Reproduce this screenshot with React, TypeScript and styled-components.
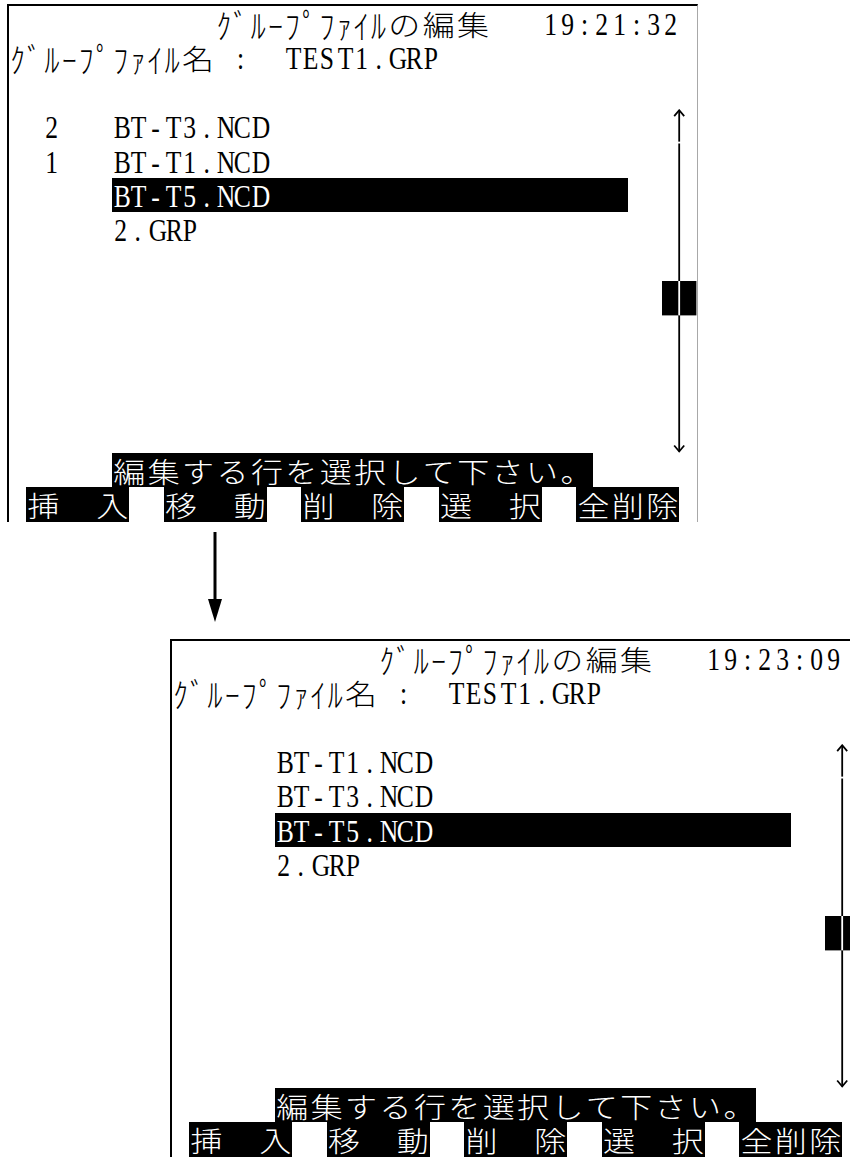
import React from 'react';
import styled, { createGlobalStyle, css } from 'styled-components';

const CELL = 17.2;
const ROW = 34.4;
const COLS = 40;
const ROWS = 15;

type Kind = 'latin' | 'kana' | 'wide';

const Global = createGlobalStyle`
  html, body { margin: 0; padding: 0; background: #fff; }
  body { width: 850px; height: 1160px; overflow: hidden; }
`;

const Page = styled.main`
  display: flex;
  flex-direction: column;
  align-items: flex-start;
  width: 850px;
  height: 1160px;
  overflow: hidden;
  padding-top: 4px;
  box-sizing: border-box;
`;

const Screen = styled.section<{ $indent: number; $gap: number }>`
  flex: none;
  display: grid;
  grid-template-columns: repeat(${COLS}, ${CELL}px);
  grid-template-rows: repeat(${ROWS}, ${ROW}px);
  width: ${COLS * CELL}px;
  margin-left: ${(p) => p.$indent}px;
  margin-top: ${(p) => p.$gap}px;
  border-top: 2px solid #000;
  border-left: 2px solid #000;
  border-right: 1px solid #a8a8a8;
  background: #fff;
`;

const Segment = styled.div<{ $row: number; $col: number; $span: number; $inverse?: boolean }>`
  grid-row: ${(p) => p.$row + 1};
  grid-column: ${(p) => p.$col + 1} / span ${(p) => p.$span};
  display: flex;
  height: ${ROW}px;
  background: ${(p) => (p.$inverse ? '#000' : 'transparent')};
  color: ${(p) => (p.$inverse ? '#fff' : '#000')};
`;

const kindStyles: Record<Kind, ReturnType<typeof css>> = {
  latin: css`
    width: ${CELL}px;
    font-family: 'Liberation Serif', 'Times New Roman', serif;
    font-size: 32px;
    transform: translateY(1px) scaleX(0.8);
  `,
  kana: css`
    width: ${CELL}px;
    font-family: 'Noto Sans CJK JP', 'Noto Sans CJK SC', sans-serif;
    font-weight: 300;
    font-size: 30px;
    transform: translateY(1px) scaleY(1.12);
  `,
  wide: css`
    width: ${CELL * 2}px;
    font-family: 'Noto Sans CJK JP', 'Noto Sans CJK SC', sans-serif;
    font-weight: 300;
    font-size: 32px;
    transform: scaleY(0.9);
  `,
};

const Glyph = styled.span<{ $kind: Kind }>`
  flex: none;
  display: block;
  height: ${ROW}px;
  line-height: ${ROW}px;
  text-align: center;
  white-space: pre;
  ${(p) => kindStyles[p.$kind]}
`;

const ScrollTrack = styled.div`
  grid-row: 4 / span 10;
  grid-column: 39 / span 2;
  display: block;
`;

const FlowArrow = styled.svg`
  flex: none;
  display: block;
  margin: 10px 0 0 207px;
`;

type Seg = { row: number; col: number; text: string; inverse?: boolean; span?: number };

const kindOf = (ch: string): Kind => {
  const c = ch.codePointAt(0) ?? 0;
  if (c <= 0x7e) return 'latin';
  if (c >= 0xff61 && c <= 0xff9f) return 'kana';
  return 'wide';
};

const widthOf = (ch: string) => (kindOf(ch) === 'wide' ? 2 : 1);

const textCells = (s: string) => Array.from(s).reduce((n, ch) => n + widthOf(ch), 0);

const menu: Seg[] = [
  { row: 14, col: 1, text: '挿　入', inverse: true },
  { row: 14, col: 9, text: '移　動', inverse: true },
  { row: 14, col: 17, text: '削　除', inverse: true },
  { row: 14, col: 25, text: '選　択', inverse: true },
  { row: 14, col: 33, text: '全削除', inverse: true },
];

const header = (time: string): Seg[] => [
  { row: 0, col: 12, text: 'ｸﾞﾙｰﾌﾟﾌｧｲﾙの編集' },
  { row: 0, col: 31, text: time },
  { row: 1, col: 0, text: 'ｸﾞﾙｰﾌﾟﾌｧｲﾙ名 :  TEST1.GRP' },
];

const prompt: Seg = { row: 13, col: 6, text: '編集する行を選択して下さい。', inverse: true };

const screenBefore: Seg[] = [
  ...header('19:21:32'),
  { row: 3, col: 2, text: '2' },
  { row: 3, col: 6, text: 'BT-T3.NCD' },
  { row: 4, col: 2, text: '1' },
  { row: 4, col: 6, text: 'BT-T1.NCD' },
  { row: 5, col: 6, text: 'BT-T5.NCD', inverse: true, span: 30 },
  { row: 6, col: 6, text: '2.GRP' },
  prompt,
  ...menu,
];

const screenAfter: Seg[] = [
  ...header('19:23:09'),
  { row: 3, col: 6, text: 'BT-T1.NCD' },
  { row: 4, col: 6, text: 'BT-T3.NCD' },
  { row: 5, col: 6, text: 'BT-T5.NCD', inverse: true, span: 30 },
  { row: 6, col: 6, text: '2.GRP' },
  prompt,
  ...menu,
];

const ScrollBar = () => {
  const w = CELL * 2;
  const h = ROW * 10;
  const cx = CELL;
  const thumbY = ROW * 5;
  return (
    <ScrollTrack>
      <svg width={w} height={h} viewBox={`0 0 ${w} ${h}`}>
        <g stroke="#000" strokeWidth={1.8} fill="none">
          <line x1={cx} y1={1} x2={cx} y2={32.6} />
          <polyline points={`${cx - 5},7 ${cx},1.2 ${cx + 5},7`} />
          <line x1={cx} y1={34.4} x2={cx} y2={h - 1.5} />
          <polyline points={`${cx - 5},${h - 7.5} ${cx},${h - 1.5} ${cx + 5},${h - 7.5}`} />
        </g>
        <rect x={0} y={thumbY} width={w} height={ROW} fill="#000" />
        <line x1={cx} y1={thumbY} x2={cx} y2={thumbY + ROW} stroke="#fff" strokeWidth={1.8} />
      </svg>
    </ScrollTrack>
  );
};

const LcdScreen = ({ segs, indent, gap }: { segs: Seg[]; indent: number; gap: number }) => (
  <Screen $indent={indent} $gap={gap}>
    {segs.map((s, i) => (
      <Segment key={i} $row={s.row} $col={s.col} $span={s.span ?? textCells(s.text)} $inverse={s.inverse}>
        {Array.from(s.text).map((ch, j) => (
          <Glyph key={j} $kind={kindOf(ch)}>
            {ch}
          </Glyph>
        ))}
      </Segment>
    ))}
    <ScrollBar />
  </Screen>
);

export default function App() {
  return (
    <>
      <Global />
      <Page>
        <LcdScreen segs={screenBefore} indent={7} gap={0} />
        <FlowArrow width={16} height={90} viewBox="0 0 16 90">
          <line x1={8} y1={0} x2={8} y2={70} stroke="#000" strokeWidth={3} />
          <polygon points="1,67 15,67 8,90" fill="#000" />
        </FlowArrow>
        <LcdScreen segs={screenAfter} indent={170} gap={17} />
      </Page>
    </>
  );
}
